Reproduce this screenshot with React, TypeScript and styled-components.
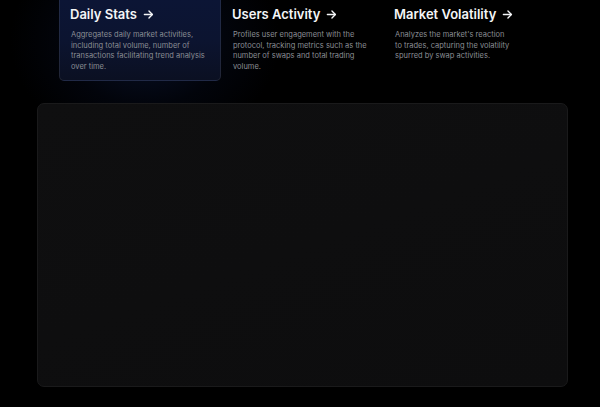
import styled, { createGlobalStyle } from "styled-components";

const GlobalStyle = createGlobalStyle`
  html, body {
    margin: 0;
    padding: 0;
    background: #000;
  }
  body {
    font-family: Inter, "Noto Sans", sans-serif;
  }
`;

const Page = styled.div`
  width: 600px;
  height: 407px;
  overflow: hidden;
  background:
    radial-gradient(ellipse 135px 110px at 145px 40px, rgba(22, 45, 110, 0.4), rgba(10, 22, 60, 0.18) 60%, transparent 100%),
    #000;
`;

const CardRow = styled.div`
  display: grid;
  grid-template-columns: repeat(3, 162px);
  padding-left: 59px;
`;

const Card = styled.div<{ $active?: boolean }>`
  box-sizing: border-box;
  height: 81px;
  padding: 5px 11px 0;
  border-radius: 0 0 5px 5px;
  border: 1px solid ${(p) => (p.$active ? "rgba(255,255,255,0.09)" : "transparent")};
  border-top: none;
  background: ${(p) =>
    p.$active
      ? "linear-gradient(180deg, #0c1535 0%, #0c1430 50%, #0b1022 100%)"
      : "transparent"};
`;

const Title = styled.div`
  display: flex;
  align-items: center;
  gap: 6px;
  color: #f4f5f7;
  font-size: 13px;
  font-weight: 600;
  line-height: 18px;
  margin-left: -1px;
`;

const Desc = styled.p<{ $max: number }>`
  margin: 7px 0 0;
  max-width: ${(p) => p.$max}px;
  color: #8a8d94;
  font-size: 7.5px;
  line-height: 10.7px;
`;

const Panel = styled.div`
  box-sizing: border-box;
  margin: 22px 0 0 37px;
  width: 531px;
  height: 284px;
  border-radius: 7px;
  border: 1px solid #1a1a1b;
  background: linear-gradient(160deg, #0f0f10 0%, #0d0d0e 100%);
`;

const Arrow = () => (
  <svg width="11" height="11" viewBox="0 0 24 24" fill="none" stroke="#f4f5f7" strokeWidth="3" strokeLinecap="round" strokeLinejoin="round">
    <path d="M3 12h17" />
    <path d="M13 4.5l7.5 7.5-7.5 7.5" />
  </svg>
);

const cards = [
  {
    title: "Daily Stats",
    desc: "Aggregates daily market activities, including total volume, number of transactions facilitating trend analysis over time.",
    max: 140,
    active: true,
  },
  {
    title: "Users Activity",
    desc: "Profiles user engagement with the protocol, tracking metrics such as the number of swaps and total trading volume.",
    max: 140,
  },
  {
    title: "Market Volatility",
    desc: "Analyzes the market's reaction to trades, capturing the volatility spurred by swap activities.",
    max: 116,
  },
];

export default function App() {
  return (
    <>
      <GlobalStyle />
      <Page>
        <CardRow>
          {cards.map((c) => (
            <Card key={c.title} $active={c.active}>
              <Title>
                {c.title}
                <Arrow />
              </Title>
              <Desc $max={c.max}>{c.desc}</Desc>
            </Card>
          ))}
        </CardRow>
        <Panel />
      </Page>
    </>
  );
}
